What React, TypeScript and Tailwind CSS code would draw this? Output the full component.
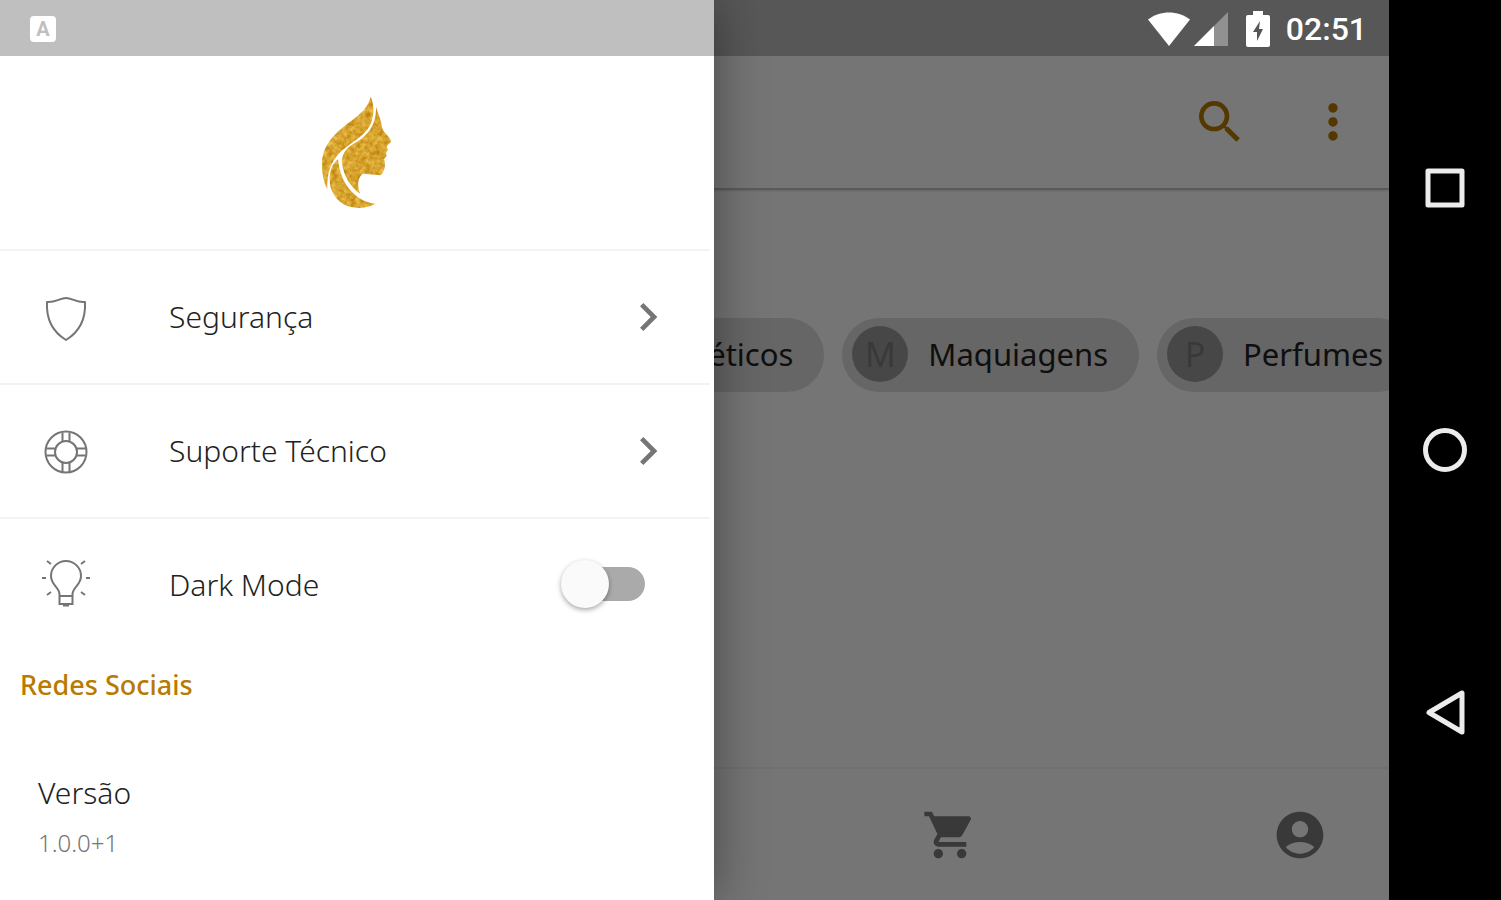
import { useState } from 'react'
import {
  MdAccountCircle,
  MdChevronRight,
  MdMoreVert,
  MdSearch,
  MdShoppingCart,
} from 'react-icons/md'

const categories = ['Cosméticos', 'Maquiagens', 'Perfumes']

function Logo() {
  return (
    <svg viewBox="92 48 222 344" className="h-[115px] w-[74px]" role="img" aria-label="Logo">
      <defs>
        <filter id="gold" x="0" y="0" width="100%" height="100%" colorInterpolationFilters="sRGB">
          <feTurbulence type="fractalNoise" baseFrequency="0.07" numOctaves="3" result="noise" />
          <feColorMatrix
            in="noise"
            type="matrix"
            values="0.3 0 0 0 0.69  0.4 0 0 0 0.44  0.4 0 0 0 -0.02  0 0 0 0 1"
            result="tint"
          />
          <feComposite in="tint" in2="SourceGraphic" operator="in" />
        </filter>
      </defs>
      <g fill="#d9a02c" filter="url(#gold)">
        <path d="M244 52 C238 84 214 104 182 128 C140 160 98 196 98 256 C98 286 104 312 114 330 C112 286 124 246 154 218 C190 186 238 166 248 122 C256 96 252 70 244 52 Z" />
        <path d="M260 82 C266 104 276 120 278 146 C284 162 300 172 305 184 C306 192 294 196 292 204 L296 212 L290 222 L292 230 L284 240 C290 256 286 276 274 288 L220 284 C206 296 202 318 212 344 C182 322 162 288 158 250 C156 230 166 212 186 198 C226 176 262 148 260 82 Z" />
        <path d="M146 240 C124 256 116 292 124 324 C136 362 164 384 204 386 C226 387 244 382 258 374 C204 366 154 322 146 240 Z" />
      </g>
    </svg>
  )
}

function ShieldIcon() {
  return (
    <svg viewBox="0 0 56 56" className="size-14" fill="none" stroke="#757575" strokeWidth="2" strokeLinejoin="round" aria-hidden="true">
      <path d="M28 9 C22 9 17 14 9 13 C8 31 15 43 28 51 C41 43 48 31 47 13 C39 14 34 9 28 9 Z" />
    </svg>
  )
}

function LifebuoyIcon() {
  return (
    <svg viewBox="0 0 56 56" className="size-14" fill="none" stroke="#757575" strokeWidth="2" aria-hidden="true">
      <circle cx="28" cy="29" r="20.5" />
      <circle cx="28" cy="29" r="11" />
      <path d="M24.500 9.500v9M31.500 9.500v9M24.500 39.500v9M31.500 39.500v9M8.500 25.500h9M8.500 32.500h9M38.500 25.500h9M38.500 32.500h9" />
    </svg>
  )
}

function BulbIcon() {
  return (
    <svg viewBox="0 0 56 56" className="size-14" fill="none" stroke="#757575" strokeWidth="2" aria-hidden="true">
      <path d="M21.500 38 C21 31 13 29 13 20 A15 15 0 0 1 43 20 C43 29 35 31 34.500 38 V48 H21.500 Z" />
      <path d="M21.500 40 H34.500 M25 49.500 H31" />
      <path d="M4 22h4M48 22h4M9 5l4 3M47 5l-4 3M9 39l4-3M47 39l-4-3" />
    </svg>
  )
}

function StatusBar() {
  return (
    <div className="absolute inset-x-0 top-0 flex h-14 items-center justify-between bg-black/25 pt-0.5 pr-[22px] pl-[30px] text-white">
      <span className="flex size-[26px] items-center justify-center rounded-sm bg-white font-['Roboto',sans-serif] text-xl font-bold text-[#bfbfbf]">
        A
      </span>
      <div className="flex items-center">
        <svg viewBox="0 0 42 34" className="h-[34px] w-[42px]" fill="currentColor" aria-hidden="true">
          <path d="M0 7.500 C12 -2 30 -2 42 7.500 L21 34 Z" />
        </svg>
        <svg viewBox="0 0 34 34" className="ml-1 h-[34px] w-[34px]" fill="currentColor" aria-hidden="true">
          <path d="M0 34 L34 0 V34 Z" opacity="0.35" />
          <path d="M0 34 L20 14 V34 Z" />
        </svg>
        <svg viewBox="0 0 24 36" className="ml-[18px] h-9 w-6" fill="currentColor" aria-hidden="true">
          <path
            fillRule="evenodd"
            d="M7 0 H17 V4 H22 Q24 4 24 6 V34 Q24 36 22 36 H2 Q0 36 0 34 V6 Q0 4 2 4 H7 Z M14 10 L7 21 H11 V30 L17 18 H13 Z"
          />
        </svg>
        <time className="ml-4 font-['Roboto',sans-serif] text-[32px] leading-9 font-medium">02:51</time>
      </div>
    </div>
  )
}

function SystemNav() {
  return (
    <aside className="flex w-28 shrink-0 flex-col items-center justify-between bg-black py-40 text-[#ececec]">
      <button aria-label="Recentes">
        <svg viewBox="0 0 56 56" className="size-14" fill="none" stroke="currentColor" strokeWidth="5" strokeLinejoin="round">
          <rect x="11" y="11" width="34" height="34" />
        </svg>
      </button>
      <button aria-label="Início">
        <svg viewBox="0 0 56 56" className="size-14" fill="none" stroke="currentColor" strokeWidth="5">
          <circle cx="28" cy="28" r="19.5" />
        </svg>
      </button>
      <button aria-label="Voltar">
        <svg viewBox="0 0 56 56" className="size-14" fill="none" stroke="currentColor" strokeWidth="5" strokeLinejoin="round">
          <path d="M45 9 V48 L12 28.500 Z" />
        </svg>
      </button>
    </aside>
  )
}

function Shop() {
  return (
    <main className="flex h-full flex-col overflow-hidden bg-white pt-14">
      <header className="flex h-[134px] shrink-0 items-center justify-end gap-[57px] border-b-2 border-[#c4c4c4] pr-7 text-[#b87a00] shadow-sm">
        <button aria-label="Buscar">
          <MdSearch className="size-14" />
        </button>
        <button aria-label="Mais opções">
          <MdMoreVert className="size-14" />
        </button>
      </header>

      <div className="flex flex-1 items-start gap-[18px] overflow-hidden pt-32 pl-[540px]">
        {categories.map((name) => (
          <button
            key={name}
            className="flex h-[74px] shrink-0 items-center gap-5 rounded-full bg-[#dedede] pr-[31px] pb-0.5 pl-2.5 text-[31px] text-[#222222]"
          >
            <span className="flex size-14 items-center justify-center rounded-full bg-[#9c9c9c] text-[34px] text-[#7c7c7c]">
              {name[0]}
            </span>
            {name}
          </button>
        ))}
      </div>

      <nav className="flex h-[133px] shrink-0 items-center justify-end gap-[294px] border-t-2 border-[#f2f2f2] pr-[61px] text-[#7c7c7c]">
        <button aria-label="Carrinho">
          <MdShoppingCart className="size-14" />
        </button>
        <button aria-label="Perfil">
          <MdAccountCircle className="size-14" />
        </button>
      </nav>
    </main>
  )
}

const links = [
  { label: 'Segurança', icon: ShieldIcon },
  { label: 'Suporte Técnico', icon: LifebuoyIcon },
]

function Drawer() {
  const [dark, setDark] = useState(false)

  return (
    <aside className="absolute inset-y-0 left-0 flex w-[714px] max-w-full flex-col bg-white pt-14 text-[30px] text-[#222222] shadow-[0_0_48px_rgba(0,0,0,0.4)]">
      <div className="mr-1 flex h-[195px] items-center justify-center border-b-2 border-[#f3f3f3] pl-1">
        <Logo />
      </div>

      {links.map(({ label, icon: Icon }) => (
        <a
          key={label}
          href="#"
          className="mr-1 flex h-[134px] items-center border-b-2 border-[#f3f3f3] pr-[34px] pl-[38px] font-light"
        >
          <Icon />
          <span className="ml-[75px] flex-1 pb-0.5">{label}</span>
          <MdChevronRight className="size-14 text-[#757575]" />
        </a>
      ))}

      <div className="mr-1 flex h-[130px] items-center pr-[65px] pl-[38px] font-light">
        <BulbIcon />
        <label htmlFor="dark-mode" className="ml-[75px] flex-1">
          Dark Mode
        </label>
        <input
          id="dark-mode"
          type="checkbox"
          role="switch"
          checked={dark}
          onChange={(e) => setDark(e.target.checked)}
          className="relative h-[34px] w-20 cursor-pointer appearance-none rounded-full bg-[#aaaaaa] before:absolute before:-top-[7px] before:-left-1 before:size-12 before:rounded-full before:bg-[#fafafa] before:shadow-[0_2px_5px_rgba(0,0,0,0.35)] checked:bg-[#dcbc7f] checked:before:left-9 checked:before:bg-[#b87a00]"
        />
      </div>

      <h2 className="mt-4 pl-5 text-[27px] leading-10 font-medium text-[#b87a00]">Redes Sociais</h2>

      <div className="mt-[66px] pl-[38px] font-light">
        <p className="leading-[44px]">Versão</p>
        <p className="mt-1.5 text-2xl leading-[44px] text-[#757575]">1.0.0+1</p>
      </div>
    </aside>
  )
}

export default function App() {
  return (
    <div className="flex h-screen bg-black font-['Noto_Sans',sans-serif]">
      <div className="relative min-w-0 flex-1 overflow-hidden">
        <Shop />
        <div className="absolute inset-0 bg-black/54" />
        <Drawer />
        <StatusBar />
      </div>
      <SystemNav />
    </div>
  )
}
